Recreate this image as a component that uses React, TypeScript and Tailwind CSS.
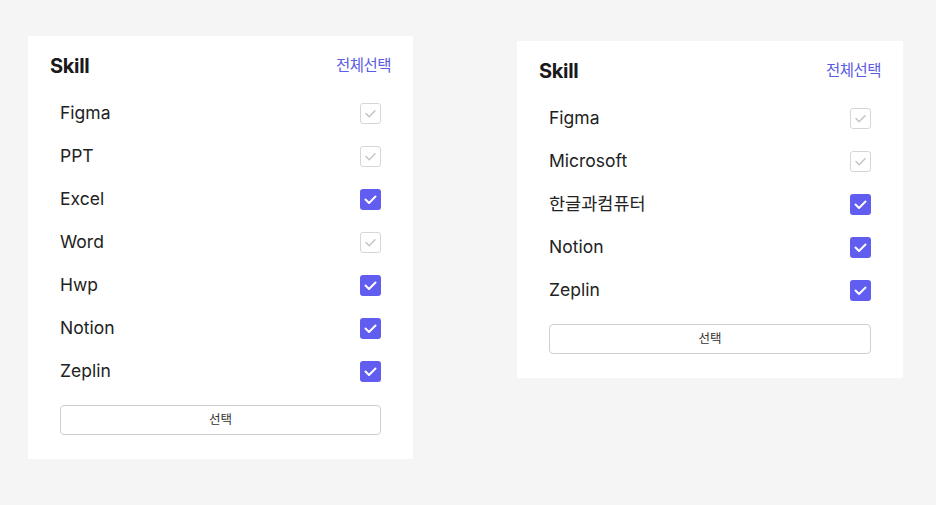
import React from "react";

type Item = { label: string; checked: boolean };

function Check({ checked }: { checked: boolean }) {
  return (
    <div
      className={
        checked
          ? "w-[21px] h-[21px] rounded-[3px] bg-[#605df0] flex items-center justify-center"
          : "w-[21px] h-[21px] rounded-[3px] border border-[#d6d6d6] bg-white flex items-center justify-center"
      }
    >
      <svg width="21" height="21" viewBox="0 0 21 21" fill="none">
        <polyline
          points="5.5,10.5 9,14 15.5,7.5"
          stroke={checked ? "#ffffff" : "#c4c4c4"}
          strokeWidth={checked ? 2 : 1.6}
          strokeLinecap="round"
          strokeLinejoin="round"
        />
      </svg>
    </div>
  );
}

function Card({ items, width, extra }: { items: Item[]; width: string; extra: string }) {
  return (
    <div className={`bg-white pt-[16px] pb-[24px] px-[22px] ${width} ${extra}`}>
      <div className="flex items-center justify-between h-[28px]">
        <span className="text-[20px] font-bold text-[#1a1a1a] tracking-[-0.3px]">Skill</span>
        <span className="text-[15.5px] text-[#5b5ce2] tracking-[-0.5px]">전체선택</span>
      </div>
      <div className="mt-[12px] px-[10px]">
        {items.map((it) => (
          <div key={it.label} className="h-[43px] flex items-center justify-between">
            <span className="text-[17.5px] text-[#222222]">{it.label}</span>
            <Check checked={it.checked} />
          </div>
        ))}
        <button className="mt-[12px] w-full h-[30px] rounded-[4px] border border-[#cfcfcf] bg-white text-[12.5px] text-[#333333] flex items-center justify-center">
          선택
        </button>
      </div>
    </div>
  );
}

export default function App() {
  const left: Item[] = [
    { label: "Figma", checked: false },
    { label: "PPT", checked: false },
    { label: "Excel", checked: true },
    { label: "Word", checked: false },
    { label: "Hwp", checked: true },
    { label: "Notion", checked: true },
    { label: "Zeplin", checked: true },
  ];
  const right: Item[] = [
    { label: "Figma", checked: false },
    { label: "Microsoft", checked: false },
    { label: "한글과컴퓨터", checked: true },
    { label: "Notion", checked: true },
    { label: "Zeplin", checked: true },
  ];
  return (
    <div
      className="w-[936px] h-[505px] bg-[#f5f5f5] flex items-start gap-[104px] pl-[28px] pt-[36px]"
      style={{ fontFamily: '"Inter", "Noto Sans CJK KR", sans-serif' }}
    >
      <Card items={left} width="w-[385px]" extra="" />
      <Card items={right} width="w-[386px]" extra="mt-[5px]" />
    </div>
  );
}
